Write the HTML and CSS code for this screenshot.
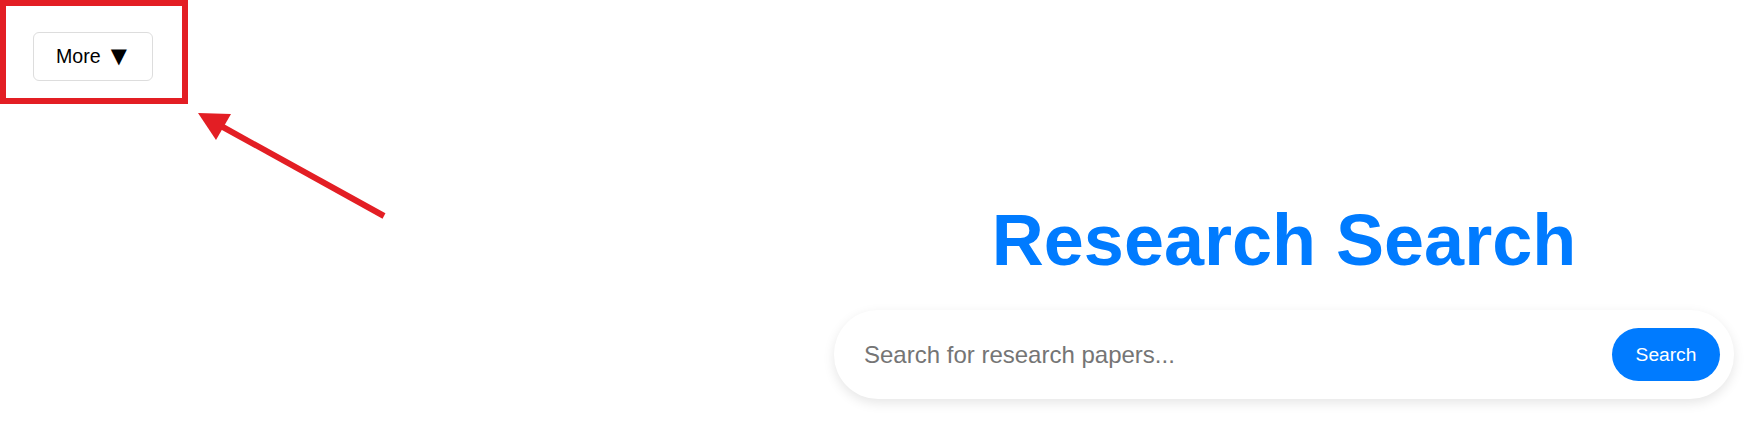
FILE: index.html
```html
<!DOCTYPE html>
<html lang="en">
<head>
<meta charset="utf-8">
<title>Research Search</title>
<link rel="stylesheet" href="styles.css">
</head>
<body>
<div class="page">
  <header class="side">
    <button class="more-btn" type="button">More <span class="caret">▼</span></button>
  </header>
  <main class="main">
    <h1 class="title">Research Search</h1>
    <form class="search-bar">
      <input class="search-input" type="text" placeholder="Search for research papers...">
      <button class="search-btn" type="button">Search</button>
    </form>
  </main>
</div>
<div class="annot-box"></div>
<svg class="annot-arrow" width="400" height="240" viewBox="0 0 400 240" xmlns="http://www.w3.org/2000/svg">
  <line x1="384" y1="216" x2="212" y2="121" stroke="#e31e24" stroke-width="6"/>
  <polygon points="198,113 231,114 216,140" fill="#e31e24"/>
</svg>
</body>
</html>
```

FILE: styles.css
```css
html, body {
  margin: 0;
  padding: 0;
  background: #ffffff;
  font-family: "Liberation Sans", Arial, sans-serif;
}

.page {
  display: flex;
  min-height: 430px;
}

.side {
  width: 816px;
  flex: none;
  padding: 32px 0 0 33px;
  box-sizing: border-box;
}

.more-btn {
  font-family: "Liberation Sans", Arial, sans-serif;
  font-size: 19.6px;
  color: #000;
  background: #fff;
  border: 1px solid #dddddd;
  border-radius: 6px;
  width: 120px;
  height: 49px;
  padding: 0 0 0 22px;
  display: flex;
  align-items: center;
  justify-content: flex-start;
  gap: 0;
  cursor: pointer;
}

.caret {
  font-family: "DejaVu Sans", sans-serif;
  font-size: 21px;
  line-height: 1;
  margin-left: 10px;
}

.main {
  flex: 1;
  display: flex;
  flex-direction: column;
  align-items: center;
  padding-top: 197px;
}

.title {
  margin: 0;
  font-size: 72px;
  line-height: 86px;
  font-weight: bold;
  color: #007bff;
}

.search-bar {
  margin: 27px 0 0 0;
  width: 900px;
  height: 89px;
  box-sizing: border-box;
  display: flex;
  align-items: center;
  padding: 0 14px 0 30px;
  background: #fff;
  border-radius: 44px;
  box-shadow: 0 4px 12px rgba(0, 0, 0, 0.1);
}

.search-input {
  flex: 1;
  border: none;
  outline: none;
  background: transparent;
  font-family: "Liberation Sans", Arial, sans-serif;
  font-size: 24px;
  color: #333;
  padding: 0;
}

.search-input::placeholder {
  color: #757575;
}

.search-btn {
  width: 108px;
  height: 53px;
  border: none;
  border-radius: 27px;
  background: #007bff;
  color: #fff;
  font-family: "Liberation Sans", Arial, sans-serif;
  font-size: 19.2px;
  padding: 0;
  cursor: pointer;
}

.annot-box {
  position: absolute;
  left: 0;
  top: 0;
  width: 188px;
  height: 104px;
  box-sizing: border-box;
  border: 6px solid #e31e24;
  pointer-events: none;
}

.annot-arrow {
  position: absolute;
  left: 0;
  top: 0;
  pointer-events: none;
}
```
